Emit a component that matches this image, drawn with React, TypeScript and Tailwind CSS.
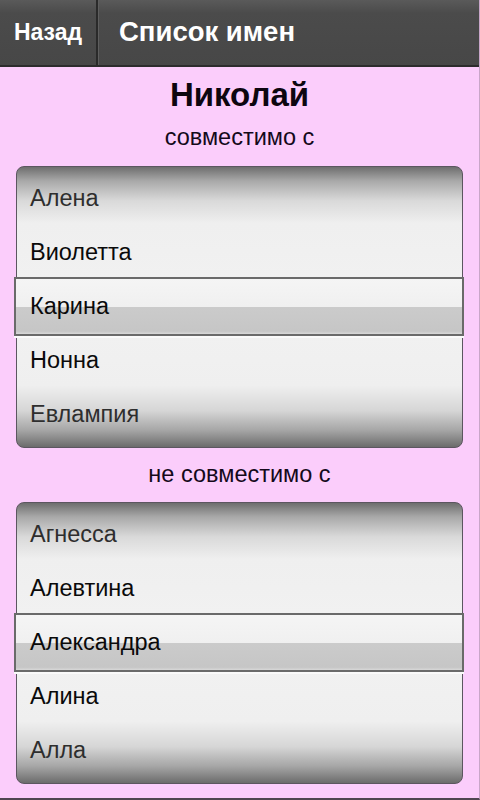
const compatible = ["Алена", "Виолетта", "Карина", "Нонна", "Евлампия"];
const incompatible = ["Агнесса", "Алевтина", "Александра", "Алина", "Алла"];

function Picker({ items }: { items: string[] }) {
  return (
    <div className="relative mx-4 h-[282px] rounded-[8px] border-[1.5px] border-[#5c5660] bg-[linear-gradient(to_bottom,#6e6e6e_0%,#a9a9a9_5%,#d9d9d9_12%,#efefef_20%,#f2f2f2_50%,#efefef_78%,#d6d6d6_87%,#a6a6a6_94%,#6c6c6c_100%)] py-[5px]">
      {/* selection bar */}
      <div className="absolute left-[-3px] right-[-2px] top-[110px] h-[59px] border-2 border-[#6a6a6a] bg-[linear-gradient(to_bottom,#f5f5f5_0%,#f0f0f0_50%,#cbcbcb_51%,#c6c6c6_95%,#d8d8d8_100%)] shadow-[0_2px_0_#fafafa]" />
      {items.map((name, i) => (
        <div
          key={name}
          className={`relative flex h-[54px] items-center pl-[13px] text-[23.5px] ${
            i === 0 || i === items.length - 1 ? "text-[#2e2e2e]" : "text-[#0a0a0a]"
          }`}
        >
          {name}
        </div>
      ))}
    </div>
  );
}

export default function App() {
  return (
    <div
      className="flex h-[800px] w-[480px] flex-col overflow-hidden border-r border-b-2 border-r-[#c9a6c9] border-b-[#4f4550] bg-[#fbcdfb]"
      style={{ fontFamily: '"Liberation Sans", Arial, sans-serif' }}
    >
      <div className="flex h-[67px] shrink-0 items-stretch border-b-2 border-[#2c2c2c] bg-[linear-gradient(to_bottom,#5a5a5a_0%,#4b4b4b_20%,#474747_100%)]">
        <div className="flex w-[98px] items-center justify-center border-r-2 border-r-[#2a2a2a] text-[23px] font-bold text-white">
          Назад
        </div>
        <div className="flex items-center border-l border-l-[#5e5e5e] pb-[1px] pl-[20px] text-[27.5px] font-bold text-white">
          Список имен
        </div>
      </div>

      <div className="flex h-[56px] shrink-0 items-center justify-center text-[33px] font-bold text-[#0d0610]">
        Николай
      </div>
      <div className="mb-[13px] flex h-[30px] shrink-0 items-center justify-center text-[23.5px] text-[#14091a]">
        совместимо с
      </div>

      <Picker items={compatible} />

      <div className="flex h-[54px] shrink-0 items-center justify-center text-[23.5px] text-[#14091a]">
        не совместимо с
      </div>

      <Picker items={incompatible} />
    </div>
  );
}
